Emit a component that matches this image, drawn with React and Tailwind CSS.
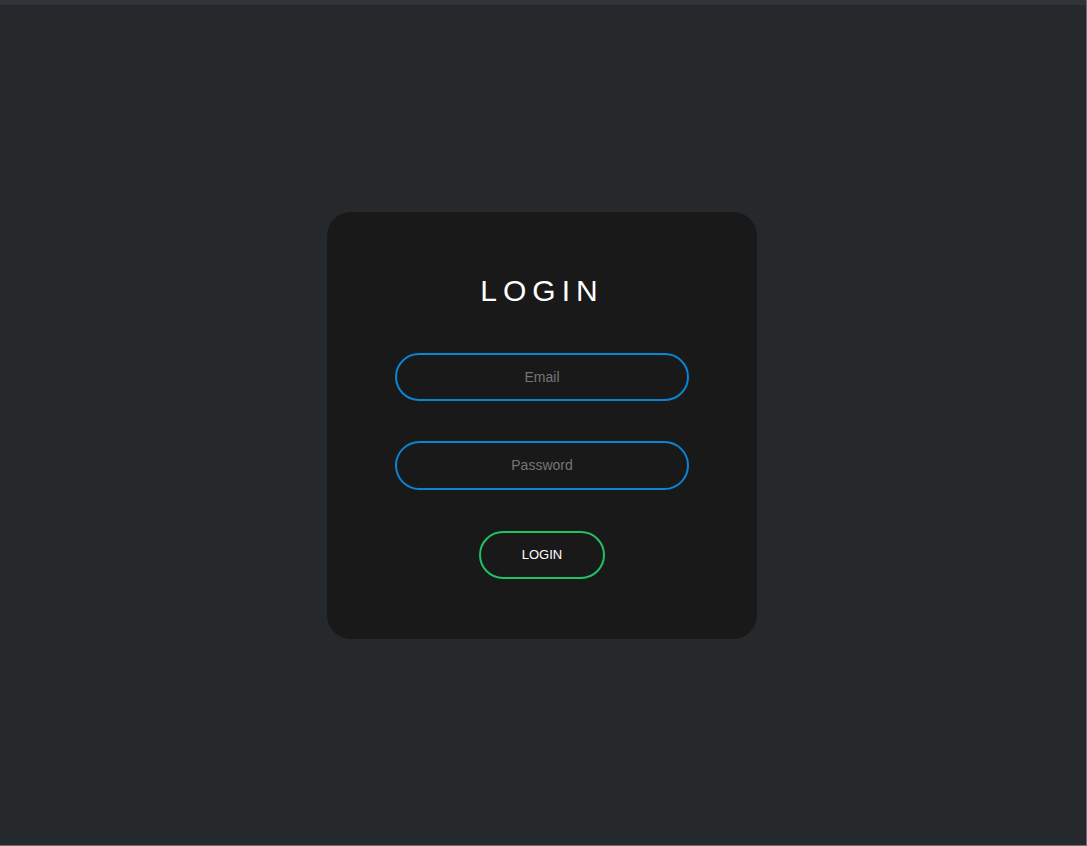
export default function App() {
    return (
        <div className="h-[846px] w-full flex flex-col bg-[#25292c] border-r border-b border-[#6b6e72]" style={{ fontFamily: '"Liberation Sans", Arial, sans-serif' }}>
            <div className="h-[5px] bg-[#333238] shrink-0"></div>
            <div className="flex-1 flex items-center justify-center">
                <div className="w-[430px] h-[427px] rounded-[24px] bg-[#191919] flex flex-col items-center pt-[61px] -ml-[2px]">
                    <h1 className="text-[30px] leading-[36px] tracking-[0.2em] text-white font-normal">LOGIN</h1>
                    <form className="flex flex-col items-center mt-[44px]" onSubmit={e => e.preventDefault()}>
                        <input
                            type="email"
                            placeholder="Email"
                            className="w-[294px] h-[48px] rounded-full border-2 border-[#0a84d6] bg-transparent text-center text-[14px] text-white placeholder-[#757575] outline-none"
                        />
                        <input
                            type="password"
                            placeholder="Password"
                            className="w-[294px] h-[49px] mt-[40px] rounded-full border-2 border-[#0a84d6] bg-transparent text-center text-[14px] text-white placeholder-[#757575] outline-none"
                        />
                        <button className="w-[126px] h-[48px] mt-[41px] rounded-full border-2 border-[#1ec463] bg-transparent text-white text-[13px]">
                            LOGIN
                        </button>
                    </form>
                </div>
            </div>
        </div>
    );
}
